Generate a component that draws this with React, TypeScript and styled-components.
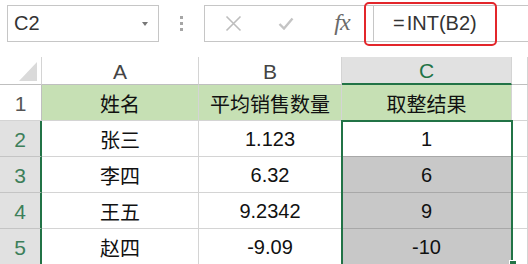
import React from "react";
import styled, { createGlobalStyle } from "styled-components";

const Global = createGlobalStyle`
  html, body { margin: 0; padding: 0; background: #fff; overflow: hidden; }
  body { width: 528px; height: 264px; font-family: "Liberation Sans", "Noto Sans CJK SC", sans-serif; }
`;

const Page = styled.div`
  position: relative;
  width: 528px;
  height: 264px;
  overflow: hidden;
`;

const Toolbar = styled.div`
  position: relative;
  height: 57px;
  box-sizing: border-box;
  padding-top: 5px;
  display: flex;
  align-items: flex-start;
`;

const NameBox = styled.div`
  margin-left: 7px;
  width: 152px;
  height: 37px;
  box-sizing: border-box;
  border: 1px solid #c6c6c6;
  display: flex;
  align-items: center;
  justify-content: space-between;
  padding: 0 10px 0 6px;
  font-size: 20px;
  color: #333;
`;

const Arrow = styled.span`
  width: 0;
  height: 0;
  border-left: 3.5px solid transparent;
  border-right: 3.5px solid transparent;
  border-top: 4px solid #777;
`;

const Dots = styled.div`
  width: 45px;
  height: 37px;
  display: flex;
  flex-direction: column;
  align-items: center;
  justify-content: center;
  gap: 3px;
  & span { width: 3px; height: 3px; background: #a6a6a6; }
`;

const FormulaBar = styled.div`
  flex: 1;
  height: 37px;
  margin-right: -2px;
  box-sizing: border-box;
  border: 1px solid #c6c6c6;
  display: flex;
  align-items: stretch;
`;

const IconCell = styled.div<{ $w: number }>`
  width: ${(p) => p.$w}px;
  display: flex;
  align-items: center;
  justify-content: center;
`;

const Fx = styled.span`
  font-family: "Liberation Serif", serif;
  font-style: italic;
  font-size: 24px;
  color: #6a6a6a;
  letter-spacing: -1px;
  margin-top: -2px;
`;

const FormulaInput = styled.div`
  flex: 1;
  border-left: 1px solid #c6c6c6;
  display: flex;
  align-items: center;
  padding-left: 19px;
  font-size: 20px;
  color: #333;
  & b { font-weight: normal; margin-right: 2px; }
`;

const Annotation = styled.div`
  position: absolute;
  left: 364px;
  top: 2px;
  width: 133px;
  height: 44px;
  box-sizing: border-box;
  border: 2px solid #e3262b;
  border-radius: 5px;
`;

const SheetWrap = styled.div`
  position: relative;
`;

const Grid = styled.div`
  display: grid;
  grid-template-columns: 42px 157px 143px 170px 1fr;
  grid-template-rows: 28px repeat(5, 36px);
`;

const Corner = styled.div`
  position: relative;
  box-sizing: border-box;
  border-right: 1px solid #d4d4d4;
  border-bottom: 1px solid #bfbfbf;
  &::after {
    content: "";
    position: absolute;
    right: 4px;
    bottom: 3px;
    width: 0;
    height: 0;
    border-left: 18px solid transparent;
    border-bottom: 19px solid #dadada;
  }
`;

const ColHead = styled.div<{ $sel?: boolean }>`
  box-sizing: border-box;
  display: flex;
  align-items: center;
  justify-content: center;
  font-size: 21px;
  padding-top: 2px;
  background: ${(p) => (p.$sel ? "#e1e1e1" : "#fff")};
  color: ${(p) => (p.$sel ? "#217346" : "#444")};
  border-right: 1px solid #d4d4d4;
  border-bottom: ${(p) => (p.$sel ? "2px solid #217346" : "1px solid #bfbfbf")};
`;

const RowHead = styled.div<{ $sel?: boolean }>`
  box-sizing: border-box;
  display: flex;
  align-items: center;
  justify-content: center;
  font-size: 21px;
  padding-top: 3px;
  background: ${(p) => (p.$sel ? "#e1e1e1" : "#fff")};
  color: ${(p) => (p.$sel ? "#3d7f5a" : "#555")};
  border-right: ${(p) => (p.$sel ? "2px solid #217346" : "1px solid #bfbfbf")};
  border-bottom: 1px solid ${(p) => (p.$sel ? "#c4c4c4" : "#d4d4d4")};
`;

const Cell = styled.div<{ $bg?: string; $line?: string }>`
  box-sizing: border-box;
  display: flex;
  align-items: center;
  justify-content: center;
  font-size: 20px;
  color: #111;
  padding-top: 2px;
  background: ${(p) => p.$bg || "#fff"};
  border-right: 1px solid #d4d4d4;
  border-bottom: 1px solid ${(p) => p.$line || "#d4d4d4"};
`;

const Selection = styled.div`
  position: absolute;
  left: 341px;
  top: 63px;
  width: 172px;
  height: 150px;
  box-sizing: border-box;
  border: 2px solid #217346;
  pointer-events: none;
`;

const FillHandle = styled.div`
  position: absolute;
  left: 509px;
  top: 203px;
  width: 6px;
  height: 6px;
  background: #217346;
  border: 1px solid #fff;
`;

const rows = [
  { name: "张三", avg: "1.123", res: "1" },
  { name: "李四", avg: "6.32", res: "6" },
  { name: "王五", avg: "9.2342", res: "9" },
  { name: "赵四", avg: "-9.09", res: "-10" },
];

const GREEN = "#c6e0b4";

export default function App() {
  return (
    <Page>
      <Global />
      <Toolbar>
        <NameBox>
          <span>C2</span>
          <Arrow />
        </NameBox>
        <Dots>
          <span />
          <span />
          <span />
        </Dots>
        <FormulaBar>
          <IconCell $w={56}>
            <svg width="17" height="17" viewBox="0 0 17 17">
              <path d="M1.5 1.5 L15.5 15.5 M15.5 1.5 L1.5 15.5" stroke="#bdbdbd" strokeWidth="1.6" fill="none" />
            </svg>
          </IconCell>
          <IconCell $w={50}>
            <svg width="16" height="13" viewBox="0 0 16 13">
              <path d="M1.5 7 L6 11.5 L14.5 1.5" stroke="#c4c4c4" strokeWidth="2.4" fill="none" />
            </svg>
          </IconCell>
          <IconCell $w={62}>
            <Fx>fx</Fx>
          </IconCell>
          <FormulaInput>
            <b>=</b>INT(B2)
          </FormulaInput>
        </FormulaBar>
        <Annotation />
      </Toolbar>
      <SheetWrap>
        <Grid>
          <Corner />
          <ColHead>A</ColHead>
          <ColHead>B</ColHead>
          <ColHead $sel>C</ColHead>
          <ColHead />

          <RowHead>1</RowHead>
          <Cell $bg={GREEN}>姓名</Cell>
          <Cell $bg={GREEN}>平均销售数量</Cell>
          <Cell $bg={GREEN}>取整结果</Cell>
          <Cell />

          {rows.map((r, i) => (
            <React.Fragment key={r.name}>
              <RowHead $sel>{i + 2}</RowHead>
              <Cell>{r.name}</Cell>
              <Cell>{r.avg}</Cell>
              <Cell $bg={i === 0 ? "#fff" : "#c8c8c8"} $line="#a8a8a8">
                {r.res}
              </Cell>
              <Cell />
            </React.Fragment>
          ))}
        </Grid>
        <Selection />
        <FillHandle />
      </SheetWrap>
    </Page>
  );
}
